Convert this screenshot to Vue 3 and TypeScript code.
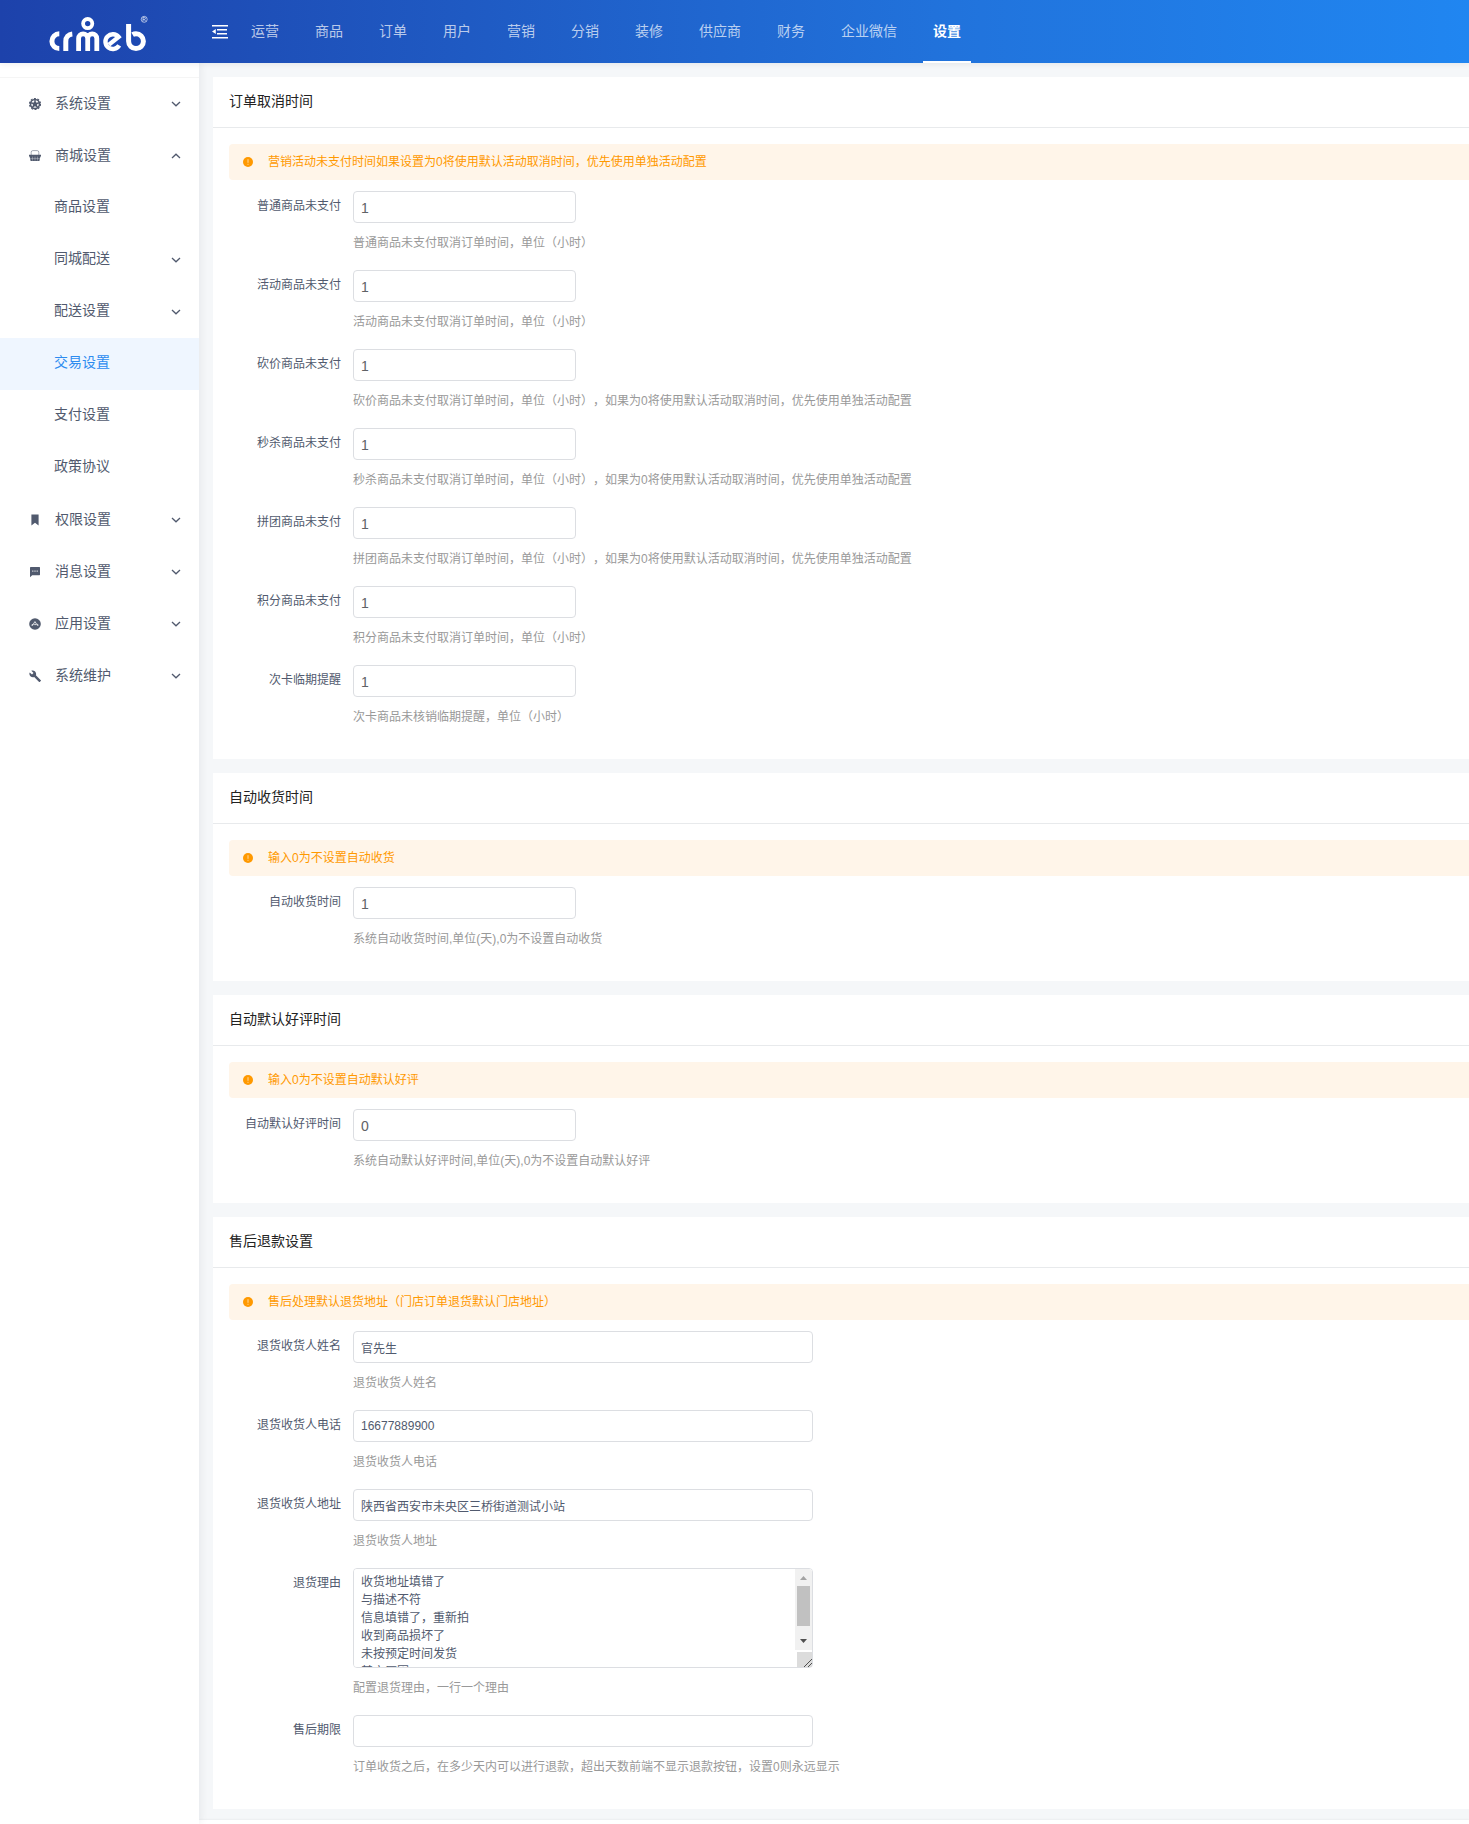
<script setup lang="ts">
import { reactive, ref } from 'vue'

interface Field {
  id: string
  label: string
  value: string
  help: string
  kind: 'number' | 'text' | 'textarea'
}

interface Section {
  title: string
  notice: string
  fields: Field[]
}

interface MenuItem {
  label: string
  icon?: string
  children?: MenuItem[]
  expandable?: boolean
}

const topMenu = ['运营', '商品', '订单', '用户', '营销', '分销', '装修', '供应商', '财务', '企业微信', '设置']
const activeTop = ref('设置')
const activeSide = ref('交易设置')

const sideMenu: MenuItem[] = [
  { label: '系统设置', icon: 'wheel', expandable: true },
  {
    label: '商城设置',
    icon: 'basket',
    expandable: true,
    children: [
      { label: '商品设置' },
      { label: '同城配送', expandable: true },
      { label: '配送设置', expandable: true },
      { label: '交易设置' },
      { label: '支付设置' },
      { label: '政策协议' },
    ],
  },
  { label: '权限设置', icon: 'bookmark', expandable: true },
  { label: '消息设置', icon: 'message', expandable: true },
  { label: '应用设置', icon: 'app', expandable: true },
  { label: '系统维护', icon: 'wrench', expandable: true },
]

const activityHint = '，如果为0将使用默认活动取消时间，优先使用单独活动配置'

const sections = reactive<Section[]>([
  {
    title: '订单取消时间',
    notice: '营销活动未支付时间如果设置为0将使用默认活动取消时间，优先使用单独活动配置',
    fields: [
      { id: 'order-normal', label: '普通商品未支付', value: '1', help: '普通商品未支付取消订单时间，单位（小时）', kind: 'number' },
      { id: 'order-activity', label: '活动商品未支付', value: '1', help: '活动商品未支付取消订单时间，单位（小时）', kind: 'number' },
      { id: 'order-bargain', label: '砍价商品未支付', value: '1', help: '砍价商品未支付取消订单时间，单位（小时）' + activityHint, kind: 'number' },
      { id: 'order-seckill', label: '秒杀商品未支付', value: '1', help: '秒杀商品未支付取消订单时间，单位（小时）' + activityHint, kind: 'number' },
      { id: 'order-group', label: '拼团商品未支付', value: '1', help: '拼团商品未支付取消订单时间，单位（小时）' + activityHint, kind: 'number' },
      { id: 'order-points', label: '积分商品未支付', value: '1', help: '积分商品未支付取消订单时间，单位（小时）', kind: 'number' },
      { id: 'card-remind', label: '次卡临期提醒', value: '1', help: '次卡商品未核销临期提醒，单位（小时）', kind: 'number' },
    ],
  },
  {
    title: '自动收货时间',
    notice: '输入0为不设置自动收货',
    fields: [
      { id: 'auto-receive', label: '自动收货时间', value: '1', help: '系统自动收货时间,单位(天),0为不设置自动收货', kind: 'number' },
    ],
  },
  {
    title: '自动默认好评时间',
    notice: '输入0为不设置自动默认好评',
    fields: [
      { id: 'auto-review', label: '自动默认好评时间', value: '0', help: '系统自动默认好评时间,单位(天),0为不设置自动默认好评', kind: 'number' },
    ],
  },
  {
    title: '售后退款设置',
    notice: '售后处理默认退货地址（门店订单退货默认门店地址）',
    fields: [
      { id: 'refund-name', label: '退货收货人姓名', value: '官先生', help: '退货收货人姓名', kind: 'text' },
      { id: 'refund-phone', label: '退货收货人电话', value: '16677889900', help: '退货收货人电话', kind: 'text' },
      { id: 'refund-address', label: '退货收货人地址', value: '陕西省西安市未央区三桥街道测试小站', help: '退货收货人地址', kind: 'text' },
      {
        id: 'refund-reason',
        label: '退货理由',
        value: '收货地址填错了\n与描述不符\n信息填错了，重新拍\n收到商品损坏了\n未按预定时间发货\n其它原因',
        help: '配置退货理由，一行一个理由',
        kind: 'textarea',
      },
      { id: 'refund-days', label: '售后期限', value: '', help: '订单收货之后，在多少天内可以进行退款，超出天数前端不显示退款按钮，设置0则永远显示', kind: 'text' },
    ],
  },
])
</script>

<template>
  <div class="layout">
    <header class="header">
      <a class="logo" href="#" aria-label="crmeb">
        <svg width="102" height="40" viewBox="48 14 102 40" fill="none" stroke="#fff" stroke-width="5">
          <path d="M59.3 33.8a7.4 7.4 0 0 0 0 14.8" />
          <path d="M65.8 51V41.2a7.2 7.2 0 0 1 6.5-7.3" />
          <path d="M78.6 51V38.4a4.55 4.55 0 0 1 9.1 0V51M87.7 38.4a4.55 4.55 0 0 1 9.1 0V51" stroke-width="4.8" />
          <circle cx="87.7" cy="23.6" r="4.6" stroke-width="3.8" />
          <path d="M109 44.6L118.6 37A7.4 7.4 0 1 0 119.2 45.4" stroke-width="4.4" />
          <path d="M128.6 24V41.2a7.4 7.4 0 1 0 7.4-7.4c-1.4 0-2.4.3-3.4.9" />
          <circle cx="144.2" cy="19.3" r="3" stroke-width=".6" />
          <path d="M143 21.2v-3.8h1.4a1 1 0 0 1 0 2H143M144.4 19.5l1.2 1.7" stroke-width=".6" />
        </svg>
      </a>
      <button class="collapse" type="button" aria-label="收起菜单">
        <svg width="16" height="14" viewBox="0 0 16 14" fill="#fff">
          <path d="M0 0h16v1.6H0zM5 4h10v1.6H5zM5 8h10v1.6H5zM0 12h16v1.6H0zM0 6.500L3.800 4v5z" />
        </svg>
      </button>
      <nav class="topnav">
        <a
          v-for="item in topMenu"
          :key="item"
          href="#"
          class="topnav-item"
          :class="{ active: item === activeTop }"
          @click.prevent="activeTop = item"
        >{{ item }}</a>
      </nav>
    </header>

    <div class="body">
      <aside class="sidebar">
        <nav class="sidemenu">
          <template v-for="group in sideMenu" :key="group.label">
            <button class="side-item" type="button">
              <svg class="side-icon" width="12" height="12" viewBox="0 0 12 12">
                <template v-if="group.icon === 'wheel'">
                  <circle cx="6" cy="6" r="4.5" fill="none" stroke="currentColor" stroke-width="1.6" />
                  <circle cx="6" cy="6" r="5.5" fill="none" stroke="currentColor" stroke-width="1.2" stroke-dasharray="2 1.45" />
                  <path d="M6 2.200l1.200 2.300 2.700.3-2 1.900.6 2.700L6 8.200 3.500 9.400l.6-2.700-2-1.900 2.700-.3z" fill="currentColor" />
                  <path d="M6 1v2.500M1.400 4.600l2.200.8M10.600 4.600l-2.200.8M3.200 9.900l1.200-2M8.800 9.900l-1.200-2" stroke="currentColor" stroke-width="1.300" />
                </template>
                <template v-else-if="group.icon === 'basket'">
                  <path d="M2.200 5V2.200Q2.200.6 3.800.6h4.400q1.600 0 1.600 1.600V5" fill="none" stroke="currentColor" stroke-width=".5" />
                  <path d="M0 4.800h12v1.600h-.6L10.400 11H1.600L.6 6.400H0z" fill="currentColor" />
                  <path d="M3.500 6.600v4M6 6.600v4M8.500 6.600v4M1 8.600h10" stroke="#fff" stroke-width=".3" />
                </template>
                <path v-else-if="group.icon === 'bookmark'" d="M2.400.6h7.200v11L6 8.800l-3.600 2.800z" fill="currentColor" />
                <template v-else-if="group.icon === 'message'">
                  <path d="M1.800 1h8.600q.6 0 .6.6v7q0 .6-.6.6H3.200L1 11.200V1.600Q1 1 1.800 1z" fill="currentColor" />
                  <path d="M3.200 5.100h1.200M5.400 5.100h1.200M7.600 5.100h1.200" stroke="#fff" stroke-width="1" />
                </template>
                <template v-else-if="group.icon === 'app'">
                  <circle cx="6" cy="6" r="5.800" fill="currentColor" />
                  <path d="M2.400 7.200l1.800-1M5.900 3.600L3.400 7.800M6 3.600l2.600 4.200M5.200 6.600h2M8 6l1.600 1.200" stroke="#fff" stroke-width=".8" fill="none" />
                </template>
                <path
                  v-else
                  d="M11.8 10.2L6.9 5.3c.5-1.3.2-2.8-.8-3.8S3.6.2 2.3.8L4.5 3 3 4.600.7 2.400C.1 3.600.3 5.100 1.400 6.200s2.500 1.300 3.800.8l4.900 4.900c.2.2.5.2.7 0l1.100-1.100c.2-.2.2-.5-.1-.6z"
                  fill="currentColor"
                />
              </svg>
              <span class="side-label">{{ group.label }}</span>
              <svg class="chevron" :class="{ open: group.children }" width="10" height="6" viewBox="0 0 10 6" fill="none" stroke="currentColor" stroke-width="1.300">
                <path d="M1 1l4 3.800L9 1" />
              </svg>
            </button>
            <a
              v-for="child in group.children ?? []"
              :key="child.label"
              href="#"
              class="side-item side-child"
              :class="{ active: child.label === activeSide }"
              @click.prevent="activeSide = child.label"
            >
              <span class="side-label">{{ child.label }}</span>
              <svg v-if="child.expandable" class="chevron" width="10" height="6" viewBox="0 0 10 6" fill="none" stroke="currentColor" stroke-width="1.300">
                <path d="M1 1l4 3.800L9 1" />
              </svg>
            </a>
          </template>
        </nav>
      </aside>

      <main class="main">
        <form class="cards" @submit.prevent>
          <section v-for="section in sections" :key="section.title" class="card">
            <h2 class="card-title">{{ section.title }}</h2>
            <div class="card-body">
              <div class="alert" role="alert">
                <svg width="10" height="10" viewBox="0 0 10 10">
                  <circle cx="5" cy="5" r="5" fill="#f90" />
                  <path d="M5 2.200v3.600M5 6.800v1" stroke="#fff5e9" stroke-width=".7" />
                </svg>
                <span>{{ section.notice }}</span>
              </div>
              <div v-for="field in section.fields" :key="field.id" class="row">
                <label class="row-label" :for="field.id">{{ field.label }}</label>
                <div class="row-control">
                  <div v-if="field.kind === 'textarea'" class="area-wrap">
                    <textarea :id="field.id" v-model="field.value" class="control area" />
                    <div class="scrollbar" aria-hidden="true">
                      <svg class="scroll-arrow" width="17" height="17" viewBox="0 0 17 17">
                        <path d="M5 11l3.500-4 3.500 4z" fill="#a3a3a3" />
                      </svg>
                      <div class="scroll-thumb"></div>
                      <svg class="scroll-arrow last" width="17" height="17" viewBox="0 0 17 17">
                        <path d="M5 6l3.500 4L12 6z" fill="#505050" />
                      </svg>
                    </div>
                  </div>
                  <input v-else-if="field.kind === 'number'" :id="field.id" v-model="field.value" class="control short" type="number" />
                  <input v-else :id="field.id" v-model="field.value" class="control" type="text" />
                  <p class="help">{{ field.help }}</p>
                </div>
              </div>
            </div>
          </section>
        </form>
        <div class="footer-bar"></div>
      </main>
    </div>
  </div>
</template>

<style>
body {
  margin: 0;
  background: #f5f7f9;
}
</style>

<style scoped>
.layout {
  display: flex;
  flex-direction: column;
  min-height: 100vh;
  font-family: "Liberation Sans", "Noto Sans CJK SC", sans-serif;
  font-size: 12px;
  line-height: 18px;
  color: #515a6e;
  text-spacing-trim: space-all;
}

.layout * {
  box-sizing: border-box;
}

.header {
  position: relative;
  z-index: 2;
  display: flex;
  align-items: stretch;
  height: 63px;
  background: linear-gradient(90deg, #1d42ab 0%, #2173dc 65%, #2086f1 100%);
  box-shadow: 0 1px 6px rgba(0, 21, 41, 0.08);
}

.logo {
  display: flex;
  align-items: center;
  width: 204px;
  padding: 5px 0 0 48px;
}

.collapse {
  display: flex;
  align-items: center;
  padding: 0 5px 0 8px;
  border: 0;
  background: none;
  cursor: pointer;
}

.topnav {
  display: flex;
  gap: 16px;
  padding-left: 8px;
}

.topnav-item {
  padding: 1px 10px 0;
  font-size: 14px;
  line-height: 60px;
  color: rgba(255, 255, 255, 0.7);
  text-decoration: none;
  white-space: nowrap;
  border-bottom: 2px solid transparent;
}

.topnav-item.active {
  border-bottom-color: #fff;
  font-weight: 700;
  color: #fff;
}

.body {
  display: flex;
  flex: 1;
}

.sidebar {
  position: relative;
  z-index: 1;
  flex: none;
  width: 199px;
  padding-top: 14px;
  background: #fff;
  box-shadow: 2px 0 8px rgba(0, 21, 41, 0.06);
}

.sidemenu {
  border-top: 1px solid #f5f5f5;
}

.side-item {
  display: flex;
  align-items: center;
  width: 100%;
  height: 52px;
  padding: 0 18px 0 29px;
  border: 0;
  background: none;
  font-family: inherit;
  font-size: 14px;
  line-height: 20px;
  color: #515a6e;
  text-align: left;
  text-decoration: none;
  cursor: pointer;
}

.side-icon {
  margin-right: 14px;
}

.side-label {
  flex: 1;
  padding-bottom: 2px;
}

.side-child {
  padding-left: 54px;
}

.side-child .side-label {
  padding-bottom: 4px;
}

.side-child.active {
  background: #eff6ff;
  color: #2d8cf0;
}

.chevron.open {
  transform: rotate(180deg);
}

.main {
  display: flex;
  flex: 1;
  flex-direction: column;
  min-width: 0;
}

.cards {
  display: flex;
  flex: 1;
  flex-direction: column;
  gap: 14px;
  padding: 14px 0 11px 14px;
}

.card {
  background: #fff;
}

.card-title {
  margin: 0;
  padding: 0 16px 2px;
  border-bottom: 1px solid #e8eaec;
  font-size: 14px;
  font-weight: 400;
  line-height: 48px;
  color: #222;
}

.card-body {
  padding: 16px 0 15px 16px;
}

.alert {
  display: flex;
  align-items: center;
  gap: 15px;
  height: 36px;
  margin-bottom: 11px;
  padding: 0 14px;
  border-radius: 4px 0 0 4px;
  background: #fff5e9;
  color: #f90;
}

.row {
  display: flex;
  margin-bottom: 18px;
}

.row-label {
  flex: none;
  width: 124px;
  padding-right: 12px;
  line-height: 30px;
  text-align: right;
}

.row-control {
  flex: 1;
  min-width: 0;
}

.control {
  display: block;
  width: 460px;
  max-width: 100%;
  height: 32px;
  padding: 4px 7px;
  border: 1px solid #dcdee2;
  border-radius: 4px;
  outline: 0;
  background: #fff;
  font-family: inherit;
  font-size: 12px;
  line-height: 18px;
  color: #515a6e;
}

.short {
  width: 223px;
  padding-top: 6px;
  font-size: 14px;
  color: #606266;
  appearance: textfield;
}

.short::-webkit-inner-spin-button {
  display: none;
}

.area-wrap {
  position: relative;
  width: 460px;
  max-width: 100%;
}

.area {
  height: 100px;
  overflow-y: scroll;
  resize: vertical;
}

.area::-webkit-scrollbar {
  width: 17px;
}

.area::-webkit-resizer {
  background: #dcdcdc url("data:image/svg+xml,%3Csvg xmlns='http://www.w3.org/2000/svg' viewBox='0 0 17 17'%3E%3Cpath d='M8 16L16 8M12 16L16 12' stroke='%23505050' fill='none'/%3E%3C/svg%3E") center / 17px 17px no-repeat;
}

.scrollbar {
  position: absolute;
  top: 1px;
  right: 1px;
  bottom: 18px;
  display: flex;
  flex-direction: column;
  width: 17px;
  border-top-right-radius: 3px;
  background: #f1f1f1;
  pointer-events: none;
}

.scroll-arrow {
  flex: none;
}

.scroll-arrow.last {
  margin-top: auto;
}

.scroll-thumb {
  height: 40px;
  margin: 0 2px;
  background: #c1c1c1;
}

.help {
  margin: 11px 0 0;
  color: #999;
}

.footer-bar {
  height: 4px;
  background: #fff;
  box-shadow: 0 -1px 2px rgba(0, 0, 0, 0.04);
}
</style>
